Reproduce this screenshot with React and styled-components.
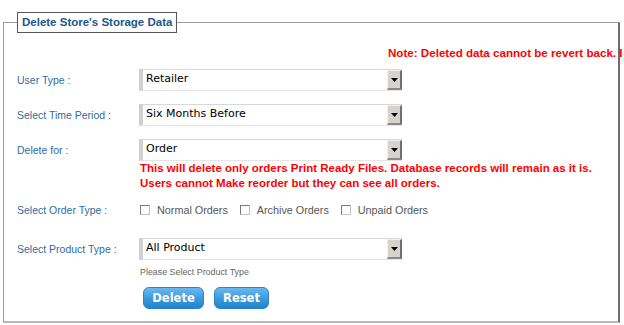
import React from 'react'
import styled, { createGlobalStyle } from 'styled-components'

const GlobalStyle = createGlobalStyle`
  html, body {
    margin: 0;
    padding: 0;
    background: #fff;
    font-family: "Liberation Sans", Arial, sans-serif;
  }
`

const App = () => {
  return (
    <>
      <GlobalStyle />
      <Page>
        <Fieldset>
          <Legend>Delete Store's Storage Data</Legend>
          <Note>Note: Deleted data cannot be revert back. I</Note>

          <Row $top={9}>
            <Label>User Type :</Label>
            <FakeSelect value="Retailer" />
          </Row>

          <Row $top={13}>
            <Label>Select Time Period :</Label>
            <FakeSelect value="Six Months Before" />
          </Row>

          <Row $top={13}>
            <Label>Delete for :</Label>
            <FakeSelect value="Order" />
          </Row>
          <Warning>
            This will delete only orders Print Ready Files. Database records will remain as it is.
            <br />
            Users cannot Make reorder but they can see all orders.
          </Warning>

          <Row $top={12}>
            <Label>Select Order Type :</Label>
            <Checks>
              {orderTypes.map((t) => (
                <CheckItem key={t}>
                  <CheckBox />
                  <CheckText>{t}</CheckText>
                </CheckItem>
              ))}
            </Checks>
          </Row>

          <Row $top={21}>
            <Label>Select Product Type :</Label>
            <FakeSelect value="All Product" />
          </Row>
          <Hint>Please Select Product Type</Hint>

          <Buttons>
            <Button $width={61}>Delete</Button>
            <Button $width={55}>Reset</Button>
          </Buttons>
        </Fieldset>
      </Page>
    </>
  )
}

const FakeSelect = ({ value }) => (
  <SelectBox>
    <SelectValue>{value}</SelectValue>
    <SelectArrow>
      <svg width="7" height="4" viewBox="0 0 7 4">
        <path d="M0 0 H7 L3.5 4 Z" fill="#000" />
      </svg>
    </SelectArrow>
  </SelectBox>
)

const orderTypes = ['Normal Orders', 'Archive Orders', 'Unpaid Orders']

const Page = styled.div`
  width: 624px;
  height: 325px;
  overflow: hidden;
`

const Fieldset = styled.fieldset`
  margin: 12px 2px 0 3px;
  width: 617px;
  box-sizing: border-box;
  padding: 0 0 12px 13px;
  border: 1px solid #9a9a9a;
  border-right: 2px solid #6e6e6e;
  border-bottom: 2px solid #b8b8b8;
  min-width: 0;
`

const Legend = styled.legend`
  margin-left: 0;
  padding: 3px 4px 4px;
  border: 1px solid #555;
  background: #fff;
  color: #1b578c;
  font-size: 11.5px;
  font-weight: bold;
  line-height: 12px;
`

const Note = styled.div`
  margin-top: 13px;
  padding-left: 371px;
  white-space: nowrap;
  color: #ff0000;
  font-size: 11.6px;
  font-weight: bold;
  line-height: 14px;
  margin-right: -20px;
`

const Row = styled.div`
  display: grid;
  grid-template-columns: 122px auto;
  align-items: center;
  margin-top: ${(p) => p.$top}px;
`

const Label = styled.div`
  color: #2f6d9e;
  font-size: 10.5px;
  line-height: 14px;
`

const SelectBox = styled.div`
  display: flex;
  width: 263px;
  height: 22px;
  box-sizing: border-box;
  border-top: 1px solid #d8d8d8;
  border-left: 4px solid #cfcfcf;
  border-bottom: 1px solid #e4e4e4;
  background: #fff;
`

const SelectValue = styled.div`
  flex: 1;
  padding-left: 3px;
  font-family: "DejaVu Sans", Verdana, sans-serif;
  font-size: 11px;
  line-height: 17px;
  color: #000;
`

const SelectArrow = styled.div`
  width: 15px;
  box-sizing: border-box;
  display: flex;
  align-items: center;
  justify-content: center;
  background: #d6d3cc;
  border-top: 1px solid #f2f2f2;
  border-left: 1px solid #f2f2f2;
  border-right: 2px solid #707070;
  border-bottom: 2px solid #8a8a8a;
`

const Warning = styled.div`
  padding-left: 123px;
  color: #ff0000;
  font-size: 11.5px;
  font-weight: bold;
  line-height: 15px;
  white-space: nowrap;
`

const Checks = styled.div`
  display: flex;
  align-items: center;
  gap: 12px;
  padding-left: 1px;
`

const CheckItem = styled.label`
  display: flex;
  align-items: center;
  gap: 7px;
`

const CheckBox = styled.span`
  width: 10px;
  height: 10px;
  box-sizing: border-box;
  border-top: 1px solid #7a7a7a;
  border-left: 1px solid #7a7a7a;
  border-right: 1px solid #c4c4c4;
  border-bottom: 1px solid #c4c4c4;
  background: #fff;
`

const CheckText = styled.span`
  color: #555;
  font-size: 10.8px;
  line-height: 14px;
`

const Hint = styled.div`
  margin-top: 6px;
  padding-left: 123px;
  color: #666;
  font-size: 8.9px;
  line-height: 12px;
`

const Buttons = styled.div`
  display: flex;
  gap: 10px;
  margin-top: 9px;
  padding-left: 126px;
`

const Button = styled.button`
  width: ${(p) => p.$width}px;
  height: 22px;
  padding: 0;
  border: 1px solid #2c83c6;
  border-radius: 6px;
  background: linear-gradient(#6bb8ee, #3d9ce0 50%, #1f83cd);
  color: #fff;
  font-family: "DejaVu Sans", Verdana, sans-serif;
  font-size: 11.5px;
  font-weight: bold;
  cursor: pointer;
`

export default App
